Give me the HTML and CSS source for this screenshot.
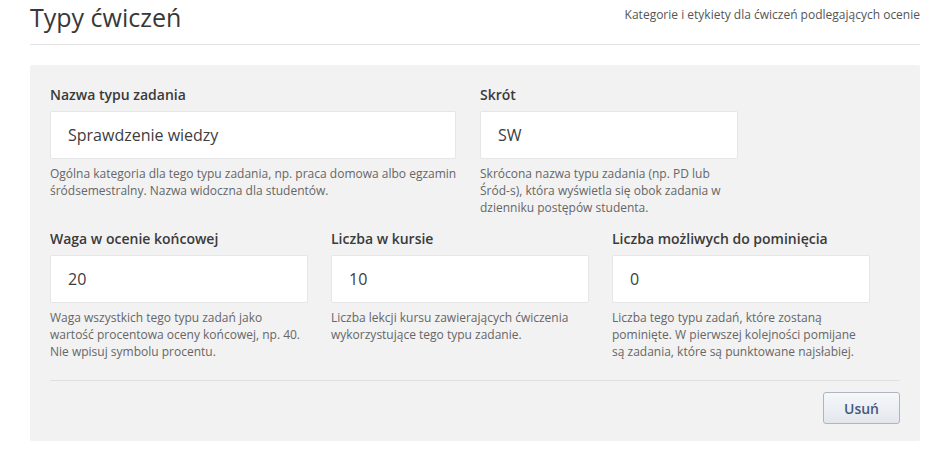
FILE: index.html
```html
<!DOCTYPE html>
<html lang="pl">
<head>
<meta charset="utf-8">
<title>Typy ćwiczeń</title>
<link rel="stylesheet" href="styles.css">
</head>
<body>
<div class="page">
  <header class="header">
    <h1 class="title">Typy ćwiczeń</h1>
    <p class="subtitle">Kategorie i etykiety dla ćwiczeń podlegających ocenie</p>
  </header>
  <section class="panel">
    <div class="row row-top">
      <div class="field">
        <label class="label">Nazwa typu zadania</label>
        <input class="input" type="text" value="Sprawdzenie wiedzy">
        <p class="help help-wide">Ogólna kategoria dla tego typu zadania, np. praca domowa albo egzamin śródsemestralny. Nazwa widoczna dla studentów.</p>
      </div>
      <div class="field">
        <label class="label">Skrót</label>
        <input class="input" type="text" value="SW">
        <p class="help">Skrócona nazwa typu zadania (np. PD lub Śród-s), która wyświetla się obok zadania w dzienniku postępów studenta.</p>
      </div>
    </div>
    <div class="row row-bottom">
      <div class="field">
        <label class="label">Waga w ocenie końcowej</label>
        <input class="input" type="text" value="20">
        <p class="help">Waga wszystkich tego typu zadań jako wartość procentowa oceny końcowej, np. 40. Nie wpisuj symbolu procentu.</p>
      </div>
      <div class="field">
        <label class="label">Liczba w kursie</label>
        <input class="input" type="text" value="10">
        <p class="help">Liczba lekcji kursu zawierających ćwiczenia wykorzystujące tego typu zadanie.</p>
      </div>
      <div class="field">
        <label class="label">Liczba możliwych do pominięcia</label>
        <input class="input" type="text" value="0">
        <p class="help">Liczba tego typu zadań, które zostaną pominięte. W pierwszej kolejności pomijane są zadania, które są punktowane najsłabiej.</p>
      </div>
    </div>
    <div class="actions">
      <button class="btn" type="button">Usuń</button>
    </div>
  </section>
</div>
</body>
</html>
```
FILE: styles.css
```css
* { box-sizing: border-box; }
html, body { margin: 0; padding: 0; background: #fff; }
body {
  font-family: "Open Sans", "Liberation Sans", sans-serif;
  color: #333;
}
.page {
  width: 890px;
  margin-left: 30px;
}
.header {
  display: flex;
  justify-content: space-between;
  align-items: flex-start;
  padding-bottom: 10px;
  border-bottom: 1px solid #e3e3e3;
}
.title {
  margin: 0;
  font-size: 25px;
  line-height: 34px;
  font-weight: 400;
  color: #383838;
}
.subtitle {
  margin: 7px 0 0;
  font-size: 12px;
  line-height: 16px;
  color: #555;
}
.panel {
  margin-top: 20px;
  background: #f2f2f2;
  border-radius: 2px;
  padding: 20px 20px 17px;
}
.row {
  display: grid;
  align-items: start;
}
.row-top {
  grid-template-columns: 406px 258px;
  column-gap: 24px;
}
.row-bottom {
  margin-top: 13px;
  grid-template-columns: 258px 258px 258px;
  column-gap: 23px;
}
.field {
  display: flex;
  flex-direction: column;
}
.label {
  font-size: 14px;
  line-height: 20px;
  font-weight: 600;
  color: #3a3a3a;
  margin-bottom: 6px;
}
.input {
  height: 48px;
  width: 100%;
  border: 1px solid #e6e6e6;
  border-radius: 2px;
  background: #fff;
  padding: 0 17px;
  font-family: inherit;
  font-size: 16px;
  color: #3d3d3d;
  outline: none;
}
.help {
  margin: 6px 0 0;
  font-size: 12px;
  line-height: 17px;
  color: #666;
}
.help-wide {
  margin-right: -8px;
}
.actions {
  margin-top: 20px;
  border-top: 1px solid #e0e0e0;
  padding-top: 11px;
  display: flex;
  justify-content: flex-end;
}
.btn {
  width: 77px;
  height: 32px;
  border: 1px solid #aeb5c0;
  border-radius: 3px;
  background: linear-gradient(#f5f7fa, #e3e7ed);
  font-family: inherit;
  font-size: 14px;
  font-weight: 600;
  color: #44597a;
  cursor: pointer;
}
```
